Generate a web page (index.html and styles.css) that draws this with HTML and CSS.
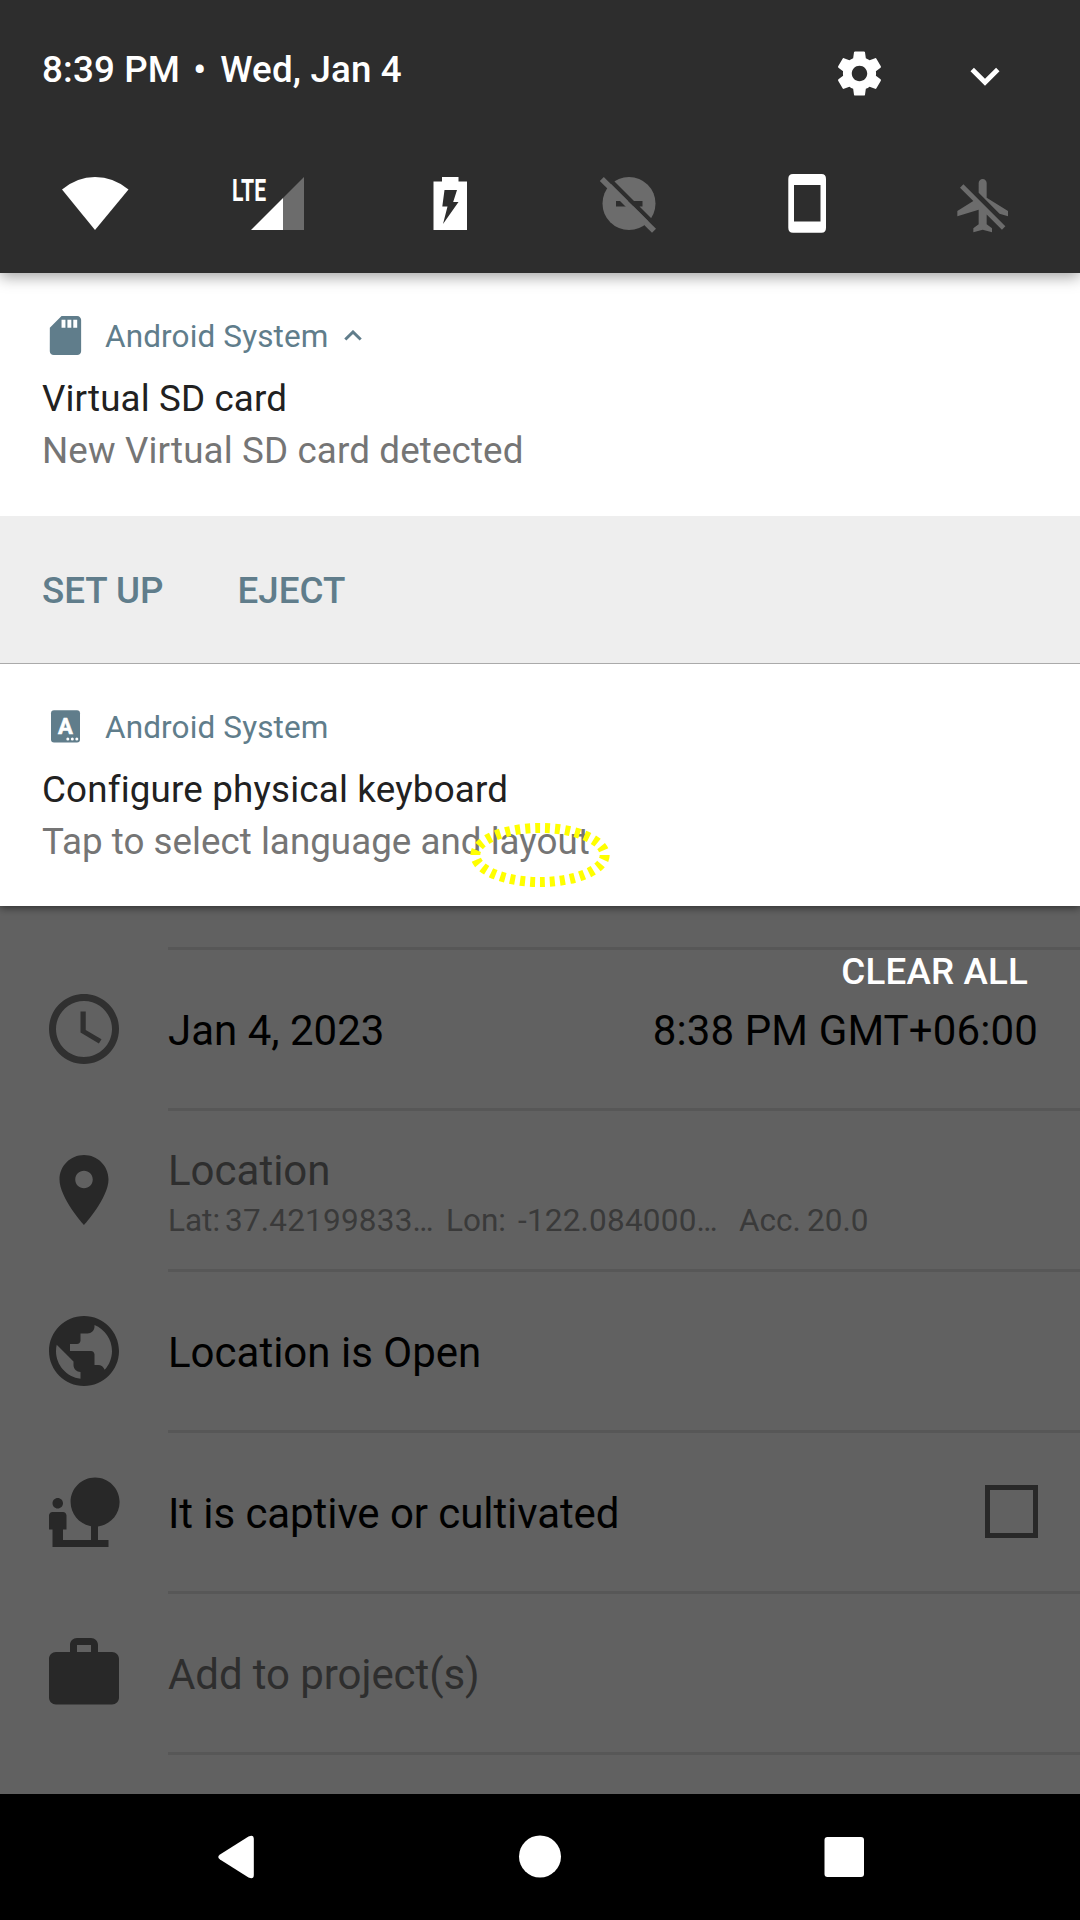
FILE: index.html
```html
<!DOCTYPE html>
<html lang="en">
<head>
<meta charset="utf-8">
<title>Notification shade</title>
<link rel="stylesheet" href="styles.css">
</head>
<body>
<div class="screen">
  <header class="quick">
    <div class="quick-top">
      <div class="clock"><span>8:39 PM</span><span class="dot">•</span><span>Wed, Jan 4</span></div>
      <svg class="gear" viewBox="0 0 24 24"><path d="M19.43 12.98c.04-.32.07-.64.07-.98s-.03-.66-.07-.98l2.11-1.65c.19-.15.24-.42.12-.64l-2-3.46c-.12-.22-.39-.3-.61-.22l-2.49 1c-.52-.4-1.08-.73-1.69-.98l-.38-2.65C14.46 2.18 14.25 2 14 2h-4c-.25 0-.46.18-.49.42l-.38 2.65c-.61.25-1.17.59-1.69.98l-2.49-1c-.23-.09-.49 0-.61.22l-2 3.46c-.13.22-.07.49.12.64l2.11 1.65c-.04.32-.07.65-.07.98s.03.66.07.98l-2.11 1.65c-.19.15-.24.42-.12.64l2 3.46c.12.22.39.3.61.22l2.49-1c.52.4 1.08.73 1.69.98l.38 2.65c.03.24.24.42.49.42h4c.25 0 .46-.18.49-.42l.38-2.65c.61-.25 1.17-.59 1.69-.98l2.49 1c.23.09.49 0 .61-.22l2-3.46c.12-.22.07-.49-.12-.64l-2.11-1.65zM12 15.5c-1.93 0-3.5-1.57-3.5-3.5s1.57-3.5 3.5-3.5 3.5 1.57 3.5 3.5-1.57 3.5-3.5 3.5z"/></svg>
      <svg class="expand" viewBox="0 0 24 24"><path d="M16.59 8.59L12 13.17 7.41 8.59 6 10l6 6 6-6z"/></svg>
    </div>
    <div class="tiles">
      <svg viewBox="6 173 178 60"><path d="M95 230L62 189.500Q77 177 95 177Q113.500 177 128.500 189.500Z"/></svg>
      <svg viewBox="184 173 178 60"><path d="M251 230L283 198V230Z"/><path class="off" d="M283 198L304 177V230H283Z"/><text class="lte" x="232" y="201" textLength="34" lengthAdjust="spacingAndGlyphs">LTE</text></svg>
      <svg viewBox="362 173 178 60"><path d="M442 177H458.500V181.500H467V230H433.500V181.500H442Z"/><path class="cut" d="M444.500 190H457L453.200 202H458.500L443 224L447.500 206.500H442.300Z"/></svg>
      <svg viewBox="540 173 178 60"><circle class="off" cx="629" cy="203.500" r="26.500"/><path class="cut" d="M616 201H642.500V206.500H616ZM600 173L606 173L658 225L658 231Z"/><path class="off" d="M603.800 177L656 228.800L652 232.700L599.800 180.900Z"/></svg>
      <svg viewBox="718 173 178 60"><path fill-rule="evenodd" d="M793 174H821.500Q826 174 826 179V227.700Q826 232.700 821.500 232.700H793Q788.300 232.700 788.300 227.700V179Q788.300 174 793 174ZM794 185V221.500H820.500V185Z"/></svg>
      <svg viewBox="896 173 178 60"><path class="off" transform="translate(952 173.700) scale(2.667)" d="M13 9V3.500c0-.83-.67-1.500-1.500-1.500S10 2.670 10 3.500v3.680l7.830 7.830L21 16v-2l-8-5zM3 5.270l4.990 4.990L2 14v2l8-2.500V19l-2 1.500V22l3.500-1 3.500 1v-1.500L13 19v-3.730L18.730 21 20 19.730 4.270 4 3 5.270z"/></svg>
    </div>
  </header>

  <section class="note">
    <div class="note-head">
      <svg class="app-icon" viewBox="-1 0 24 24"><path d="M18 2h-8L4.020 8 4 20c0 1.100.9 2 2 2h12c1.100 0 2-.9 2-2V4c0-1.100-.9-2-2-2zm-6 6h-2V4h2v4zm3 0h-2V4h2v4zm3 0h-2V4h2v4z"/></svg>
      <span>Android System</span>
      <svg class="collapse" viewBox="0 0 18 11"><path d="M1.300 9.500L9 2L16.700 9.500"/></svg>
    </div>
    <div class="title">Virtual SD card</div>
    <div class="text">New Virtual SD card detected</div>
  </section>
  <div class="actions"><span>SET UP</span><span>EJECT</span></div>
  <section class="note last">
    <div class="note-head">
      <svg class="app-icon" viewBox="40 702 47 47"><rect x="51" y="709.300" width="29" height="32.300" rx="3"/><text class="key" x="65.500" y="733" text-anchor="middle">A</text><g class="hole"><circle cx="67.800" cy="738" r="1.500"/><circle cx="72.300" cy="738" r="1.500"/><circle cx="76.800" cy="738" r="1.500"/></g></svg>
      <span>Android System</span>
    </div>
    <div class="title wide">Configure physical keyboard</div>
    <div class="text tight">Tap to select language and layout</div>
    <svg class="marker" viewBox="0 0 140 66"><ellipse cx="70" cy="33" rx="64.700" ry="27"/></svg>
  </section>

  <main class="form">
    <div class="clear">CLEAR ALL</div>
    <div class="row">
      <svg class="icon thin" viewBox="0 0 24 24"><path d="M11.990 2C6.470 2 2 6.480 2 12s4.470 10 9.990 10C17.520 22 22 17.520 22 12S17.520 2 11.990 2zM12 20c-4.420 0-8-3.580-8-8s3.580-8 8-8 8 3.580 8 8-3.580 8-8 8zm.5-13H11v6l5.250 3.150.75-1.230-4.500-2.670z"/></svg>
      <div class="cell"><span>Jan 4, 2023</span><span class="time">8:38 PM GMT+06:00</span></div>
    </div>
    <div class="row">
      <svg class="icon" viewBox="0 0 24 24"><path d="M12 2C8.130 2 5 5.130 5 9c0 5.250 7 13 7 13s7-7.750 7-13c0-3.870-3.130-7-7-7zm0 9.500c-1.380 0-2.500-1.120-2.500-2.500s1.120-2.500 2.500-2.500 2.500 1.120 2.500 2.500-1.120 2.500-2.500 2.500z"/></svg>
      <div class="cell stack">
        <div class="hint">Location</div>
        <div class="coords"><span>Lat:</span><span class="lat">37.42199833…</span><span class="lon">Lon:</span><span class="lonv">-122.084000…</span><span class="acc">Acc.</span><span class="accv">20.0</span></div>
      </div>
    </div>
    <div class="row">
      <svg class="icon" viewBox="0 0 24 24"><path d="M12 2C6.480 2 2 6.480 2 12s4.480 10 10 10 10-4.480 10-10S17.520 2 12 2zm-1 17.930c-3.950-.49-7-3.850-7-7.930 0-.62.08-1.210.21-1.790L9 15v1c0 1.100.9 2 2 2v1.930zm6.900-2.540c-.26-.81-1-1.390-1.900-1.390h-1v-3c0-.55-.45-1-1-1H8v-2h2c.55 0 1-.45 1-1V7h2c1.100 0 2-.9 2-2v-.41c2.930 1.190 5 4.060 5 7.410 0 2.080-.8 3.970-2.100 5.390z"/></svg>
      <div class="cell"><span>Location is Open</span></div>
    </div>
    <div class="row">
      <svg class="icon" viewBox="0 0 24 24"><path d="M22.170 9.170c0-3.870-3.130-7-7-7s-7 3.130-7 7c0 3.470 2.520 6.340 5.830 6.890V20H6v-3h1v-4c0-.55-.45-1-1-1H3c-.55 0-1 .45-1 1v4h1v5h16v-2h-3v-3.880c3.470-.41 6.170-3.360 6.170-6.950zM4.500 11c.83 0 1.500-.67 1.500-1.500S5.330 8 4.500 8 3 8.670 3 9.500 3.670 11 4.500 11z"/></svg>
      <div class="cell"><span class="snug">It is captive or cultivated</span><i class="box"></i></div>
    </div>
    <div class="row">
      <svg class="icon" viewBox="0 0 24 24"><path d="M20 6h-4V4c0-1.110-.89-2-2-2h-4c-1.110 0-2 .89-2 2v2H4c-1.110 0-2 .89-2 2v11c0 1.110.89 2 2 2h16c1.110 0 2-.89 2-2V8c0-1.110-.89-2-2-2zm-6 0h-4V4h4v2z"/></svg>
      <div class="cell hint"><span class="snug">Add to project(s)</span></div>
    </div>
    <div class="row end"><div class="cell"></div></div>
  </main>

  <nav class="nav">
    <svg viewBox="-1.500 0 304 126"><path d="M134.500 65.500Q131 63 134.500 60.500L163 42.500Q168.300 40 168.300 45V81Q168.300 86 163 83.500Z"/></svg>
    <svg viewBox="0 0 304 126"><circle cx="152" cy="62.500" r="21"/></svg>
    <svg viewBox="0 0 304 126"><rect x="132.500" y="43" width="39.500" height="40" rx="3"/></svg>
  </nav>
</div>
</body>
</html>
```
FILE: styles.css
```css
* { box-sizing: border-box; }
body {
  margin: 0;
  font-family: Roboto, "Noto Sans", sans-serif;
  background: #616161;
}
svg { display: block; flex: none; }
.screen {
  width: 1080px;
  height: 1920px;
  display: flex;
  flex-direction: column;
  overflow: hidden;
}

/* quick settings bar */
.quick {
  height: 273px;
  flex: none;
  position: relative;
  z-index: 2;
  background: #2d2d2d;
  color: #fff;
  fill: #fff;
  box-shadow: 0 4px 14px rgba(0, 0, 0, .36);
}
.quick-top {
  height: 173px;
  padding: 47px 59px 0 42px;
  display: flex;
  align-items: flex-start;
}
.clock {
  flex: 1;
  display: flex;
  font-size: 36.75px;
  font-weight: 500;
  line-height: 46px;
  letter-spacing: .15px;
  white-space: nowrap;
}
.dot { width: 40px; padding-left: 13px; }
.gear { width: 53px; height: 53px; margin-right: 70px; }
.expand { width: 58px; height: 58px; margin-right: 7px; }
.tiles { display: flex; padding: 0 6px; }
.tiles svg { width: 178px; height: 60px; }
.off { fill: #6c6c6c; }
.cut { fill: #2d2d2d; }
.lte { font-size: 31.5px; font-weight: 700; }

/* notifications */
.note {
  height: 243px;
  flex: none;
  padding: 39px 42px 0;
  background: #fff;
}
.note.last {
  height: 242px;
  position: relative;
  z-index: 1;
  box-shadow: 0 2px 8px rgba(0, 0, 0, .5);
  clip-path: inset(0 0 -20px 0);
}
.note-head {
  height: 50px;
  margin: 0 0 11px -2px;
  display: flex;
  align-items: center;
  font-size: 31.5px;
  line-height: 50px;
  letter-spacing: .13px;
  color: #607d8b;
  fill: #607d8b;
}
.app-icon { width: 47px; height: 47px; margin: -4px 18px 0 0; }
.key { font-size: 22px; font-weight: 700; fill: #fff; stroke: #fff; stroke-width: .6; }
.hole { fill: #fff; }
.collapse { width: 18px; height: 11px; margin: 0 0 3px 15px; fill: none; stroke: #607d8b; stroke-width: 3; }
.title, .text {
  font-size: 36.75px;
  line-height: 52px;
  letter-spacing: .13px;
  white-space: nowrap;
}
.title { color: #212121; }
.title.wide { letter-spacing: .18px; }
.text { color: #757575; }
.text.tight { letter-spacing: .02px; }
.marker {
  position: absolute;
  left: 470px;
  top: 158px;
  width: 140px;
  height: 66px;
  fill: none;
  stroke: #ff0;
  stroke-width: 10;
  stroke-dasharray: 5 5;
}
.actions {
  height: 148px;
  flex: none;
  padding: 0 42px;
  display: flex;
  gap: 74px;
  background: #eee;
  border-bottom: 1px solid #aaa;
  font-size: 36.75px;
  font-weight: 500;
  line-height: 149px;
  color: #607d8b;
}

/* dimmed form behind the shade */
.form {
  position: relative;
  flex: 1;
  min-height: 0;
  overflow: hidden;
  padding-top: 41px;
  font-size: 42px;
  color: #000;
  background: #616161;
}
.clear {
  position: absolute;
  right: 52px;
  top: 44px;
  font-size: 36.75px;
  font-weight: 500;
  line-height: 44px;
  letter-spacing: .15px;
  color: #fff;
}
.row {
  height: 161px;
  display: flex;
}
.row.end { height: 42px; }
.icon { width: 84px; height: 84px; margin: 40px 42px 0; fill: #282828; }
.icon.thin { fill: #303030; }
.cell {
  flex: 1;
  padding: 3px 42px 0 0;
  border-top: 3px solid #575757;
  display: flex;
  align-items: center;
  justify-content: space-between;
  white-space: nowrap;
}
.row.end .cell { margin-left: 168px; }
.time { letter-spacing: .13px; }
.snug { letter-spacing: -.08px; }
.stack { display: block; padding-top: 35px; }
.hint { color: #2e2e2e; }
.stack .hint { line-height: 50px; }
.coords { display: flex; font-size: 31.5px; line-height: 42px; margin-top: 4px; color: #3a3a3a; }
.coords span { flex: none; }
.coords span:first-child { width: 57px; }
.lat { width: 221px; letter-spacing: .2px; }
.lon { width: 72px; }
.lonv { width: 221px; letter-spacing: .2px; }
.acc { width: 68px; }
.box { width: 53px; height: 53px; border: 5px solid #282828; margin-top: -5px; }

/* system navigation */
.nav {
  height: 126px;
  flex: none;
  display: flex;
  justify-content: center;
  background: #000;
  fill: #fff;
}
.nav svg { width: 304px; height: 126px; }
```
